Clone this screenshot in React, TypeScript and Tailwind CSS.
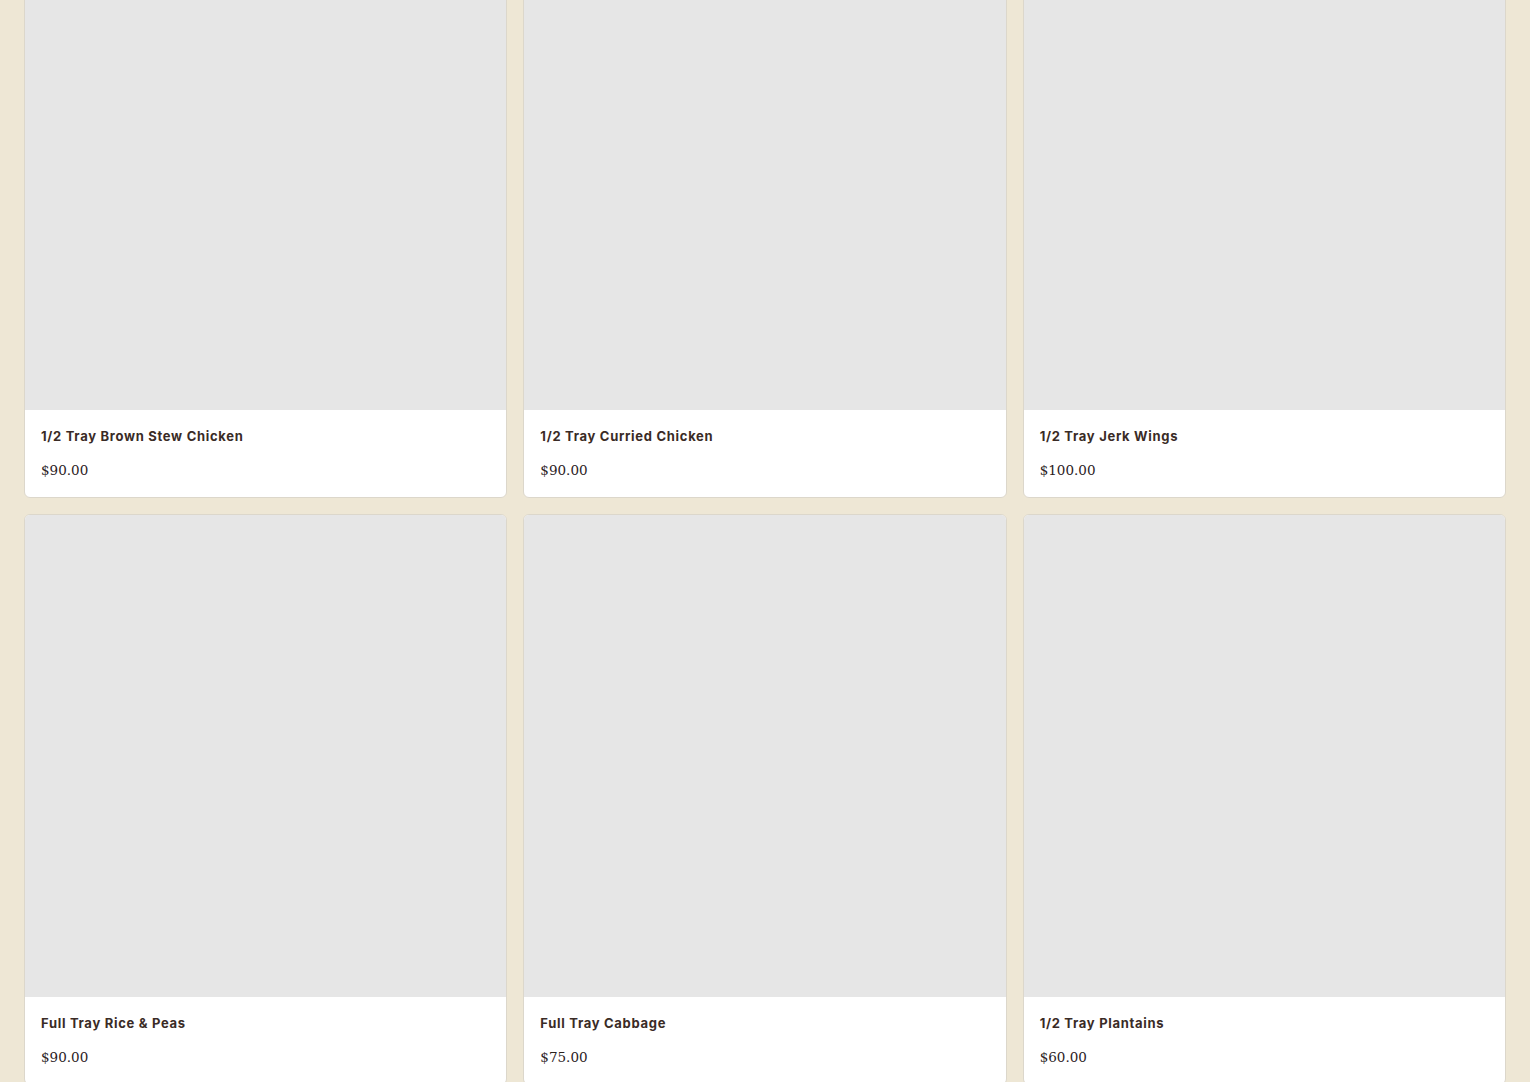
import React from "react";

type Item = { name: string; price: string };

const items: Item[] = [
  { name: "1/2 Tray Brown Stew Chicken", price: "$90.00" },
  { name: "1/2 Tray Curried Chicken", price: "$90.00" },
  { name: "1/2 Tray Jerk Wings", price: "$100.00" },
  { name: "Full Tray Rice & Peas", price: "$90.00" },
  { name: "Full Tray Cabbage", price: "$75.00" },
  { name: "1/2 Tray Plantains", price: "$60.00" },
];

const ProductCard = ({ item }: { item: Item }) => (
  <a
    href="#"
    className="flex flex-col overflow-hidden rounded-md border border-[#dcd7cb] bg-white"
  >
    <div className="aspect-square w-full bg-[#e6e6e6]" />
    <div className="flex flex-col px-4 pt-4 pb-[17px]">
      <h3 className="font-['Inter',sans-serif] text-[13px] leading-5 font-bold tracking-[0.7px] text-[#3a2b26]">
        {item.name}
      </h3>
      <p className="mt-3.5 font-['DejaVu_Serif',serif] text-[13.5px] leading-5 text-[#2b211d]">
        {item.price}
      </p>
    </div>
  </a>
);

export default function App() {
  return (
    <div className="h-[1082px] overflow-hidden bg-[#eee7d5] px-6">
      <div className="-mt-[72px] grid grid-cols-3 gap-4">
        {items.map((item, index) => (
          <ProductCard key={index} item={item} />
        ))}
      </div>
    </div>
  );
}
